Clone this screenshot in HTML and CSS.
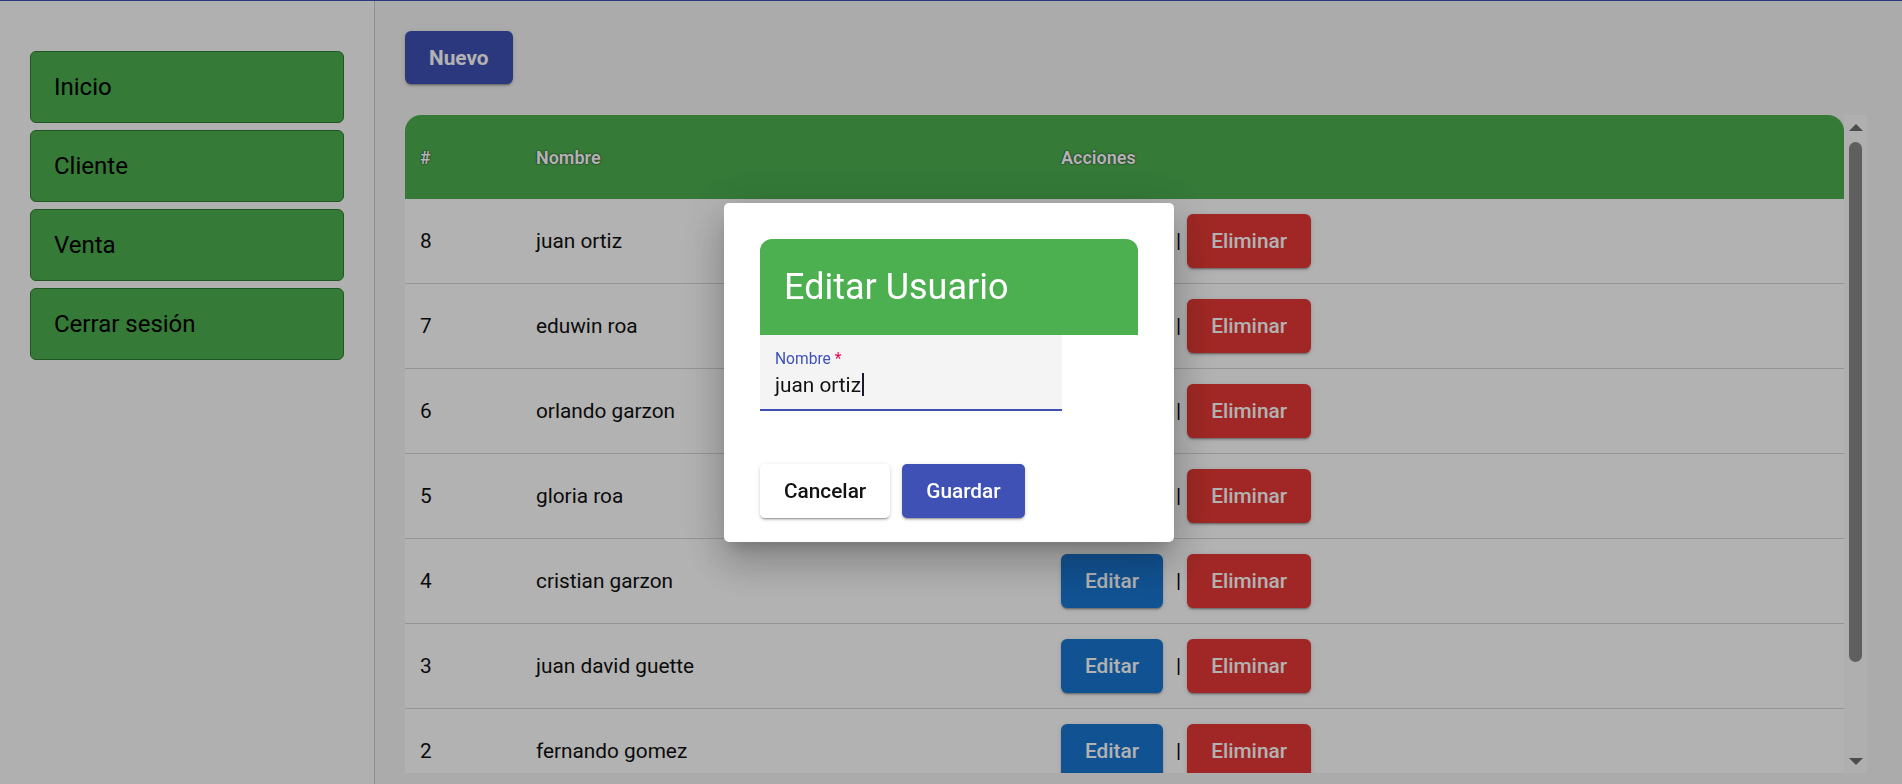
FILE: index.html
```html
<!DOCTYPE html>
<html lang="es">
<head>
<meta charset="utf-8">
<title>Usuarios</title>
<link rel="stylesheet" href="styles.css">
</head>
<body>
<div class="app">
  <aside class="sidebar">
    <a class="nav-btn">Inicio</a>
    <a class="nav-btn">Cliente</a>
    <a class="nav-btn">Venta</a>
    <a class="nav-btn">Cerrar sesión</a>
  </aside>
  <main class="content">
    <button class="btn btn-new">Nuevo</button>
    <div class="table-wrap">
      <div class="table-scroll">
        <table class="users">
          <thead>
            <tr>
              <th class="c-id">#</th>
              <th class="c-name">Nombre</th>
              <th class="c-act">Acciones</th>
            </tr>
          </thead>
          <tbody>
            <tr><td>8</td><td>juan ortiz</td><td><div class="actions"><button class="btn btn-edit">Editar</button><span class="sep">|</span><button class="btn btn-del">Eliminar</button></div></td></tr>
            <tr><td>7</td><td>eduwin roa</td><td><div class="actions"><button class="btn btn-edit">Editar</button><span class="sep">|</span><button class="btn btn-del">Eliminar</button></div></td></tr>
            <tr><td>6</td><td>orlando garzon</td><td><div class="actions"><button class="btn btn-edit">Editar</button><span class="sep">|</span><button class="btn btn-del">Eliminar</button></div></td></tr>
            <tr><td>5</td><td>gloria roa</td><td><div class="actions"><button class="btn btn-edit">Editar</button><span class="sep">|</span><button class="btn btn-del">Eliminar</button></div></td></tr>
            <tr><td>4</td><td>cristian garzon</td><td><div class="actions"><button class="btn btn-edit">Editar</button><span class="sep">|</span><button class="btn btn-del">Eliminar</button></div></td></tr>
            <tr><td>3</td><td>juan david guette</td><td><div class="actions"><button class="btn btn-edit">Editar</button><span class="sep">|</span><button class="btn btn-del">Eliminar</button></div></td></tr>
            <tr><td>2</td><td>fernando gomez</td><td><div class="actions"><button class="btn btn-edit">Editar</button><span class="sep">|</span><button class="btn btn-del">Eliminar</button></div></td></tr>
          </tbody>
        </table>
      </div>
      <div class="scrollbar" aria-hidden="true">
        <span class="arrow arrow-up"></span>
        <span class="thumb"></span>
        <span class="arrow arrow-down"></span>
      </div>
    </div>
  </main>
</div>

<div class="backdrop"></div>

<div class="dialog" role="dialog">
  <div class="dialog-head"><h2>Editar Usuario</h2></div>
  <div class="field">
    <div class="field-label">Nombre <span class="req">*</span></div>
    <div class="field-value">juan ortiz<span class="caret"></span></div>
  </div>
  <div class="dialog-actions">
    <button class="btn btn-cancel">Cancelar</button>
    <button class="btn btn-save">Guardar</button>
  </div>
</div>
</body>
</html>
```
FILE: styles.css
```css
* { box-sizing: border-box; }

html, body {
  margin: 0;
  height: 100%;
}

body {
  font-family: Roboto, "Noto Sans", "Liberation Sans", sans-serif;
  border-top: 1px solid #3f51b5;
  background: #f5f5f5;
  overflow: hidden;
}

.app {
  display: flex;
  height: 783px;
}

/* ---------- sidebar ---------- */
.sidebar {
  width: 375px;
  flex: none;
  background: #fdfdfd;
  border-right: 1px solid #cdcdcd;
  padding: 50px 30px 0 30px;
  display: flex;
  flex-direction: column;
  gap: 7px;
}

.nav-btn {
  height: 72px;
  display: flex;
  align-items: center;
  padding-left: 23px;
  background: #4caf50;
  border: 1px solid #2e7d32;
  border-radius: 6px;
  font-size: 24px;
  color: #000;
}

/* ---------- content ---------- */
.content {
  flex: 1;
  min-width: 0;
  padding: 30px 35px 0 30px;
}

.btn {
  height: 54px;
  padding: 0 24px;
  border: none;
  border-radius: 6px;
  font-family: Roboto, "Noto Sans", sans-serif;
  font-size: 20.8px;
  font-weight: 500;
  color: #fff;
  cursor: pointer;
  box-shadow: 0 3px 1px -2px rgba(0,0,0,.2), 0 2px 2px 0 rgba(0,0,0,.14), 0 1px 5px 0 rgba(0,0,0,.12);
}

.btn-new {
  display: block;
  height: 53px;
  background: #3f51b5;
  font-weight: 700;
  margin-bottom: 31px;
}

.table-wrap {
  height: 658px;
  display: flex;
}

.table-scroll {
  flex: 1;
  min-width: 0;
  overflow: hidden;
}

/* scrollbar */
.scrollbar {
  width: 23px;
  flex: none;
  background: #fbfbfb;
  display: flex;
  flex-direction: column;
  align-items: center;
  padding: 9px 0 8px;
}

.arrow {
  width: 0;
  height: 0;
  border-left: 7.5px solid transparent;
  border-right: 7.5px solid transparent;
}

.arrow-up { border-bottom: 7px solid #6e6e6e; }

.arrow-down {
  border-top: 7px solid #6e6e6e;
  margin-top: auto;
}

.thumb {
  width: 13px;
  height: 520px;
  margin-top: 11px;
  background: #888;
  border-radius: 7px;
}

.users {
  width: 100%;
  table-layout: fixed;
  border-collapse: separate;
  border-spacing: 0;
}

.users thead th {
  height: 84px;
  background: #4caf50;
  text-align: left;
  padding: 0 0 0 15px;
  font-size: 18px;
  font-weight: 700;
  color: #fff;
  text-shadow: 0 0 1px rgba(0,0,0,.9), 0 0 2px rgba(0,0,0,.5);
}

.users th.c-id { width: 116px; border-top-left-radius: 16px; }
.users th.c-name { width: 525px; }
.users th.c-act { border-top-right-radius: 16px; }

.users tbody td {
  background: #fff;
  padding: 15px 0 15px 15px;
  border-bottom: 1px solid #d6d6d6;
  font-size: 20.8px;
  line-height: 26px;
  color: #111;
  vertical-align: middle;
}

.actions {
  display: flex;
  align-items: center;
}

.btn-edit { background: #1976d2; }
.btn-del { background: #e53935; }

.sep {
  margin: 0 6px 0 13px;
  font-size: 20.8px;
  color: #000;
}

/* ---------- dialog ---------- */
.backdrop {
  position: fixed;
  inset: 0;
  background: rgba(0,0,0,.3);
}

.dialog {
  position: fixed;
  left: 724px;
  top: 203px;
  width: 450px;
  padding: 36px 36px 24px;
  background: #fff;
  border-radius: 5px;
  box-shadow: 0 11px 15px -7px rgba(0,0,0,.2), 0 24px 38px 3px rgba(0,0,0,.14), 0 9px 46px 8px rgba(0,0,0,.12);
}

.dialog-head {
  height: 96px;
  display: flex;
  align-items: center;
  padding-left: 24px;
  background: #4caf50;
  border-radius: 12px 12px 0 0;
}

.dialog-head h2 {
  margin: 0;
  font-size: 36px;
  font-weight: 400;
  color: #fff;
}

.field {
  width: 80%;
  background: #f4f4f4;
  border-bottom: 2px solid #3f51b5;
  padding: 15px 15px 11px;
}

.field-label {
  font-size: 15.6px;
  line-height: 18px;
  color: #3f51b5;
}

.field-label .req { color: #f50057; }

.field-value {
  margin-top: 4px;
  font-size: 20.8px;
  line-height: 26px;
  color: #111;
}

.caret {
  display: inline-block;
  width: 2px;
  height: 23px;
  margin-left: 1px;
  background: #1a1a2e;
  vertical-align: -4px;
}

.dialog-actions {
  display: flex;
  gap: 12px;
  margin-top: 53px;
}

.btn-cancel {
  background: #fff;
  color: #111;
  border-radius: 5px;
}

.btn-save {
  background: #3f51b5;
  border-radius: 5px;
}
```
